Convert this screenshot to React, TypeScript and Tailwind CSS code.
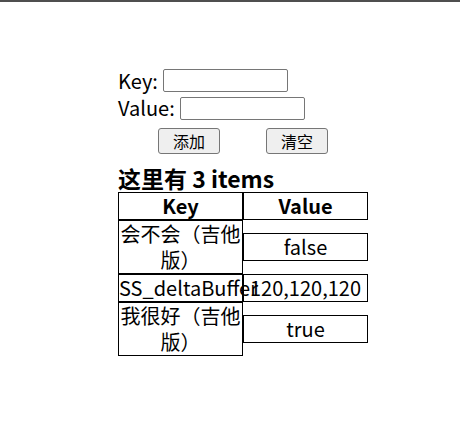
import React from 'react';

const rows: { key: string; value: string }[] = [
  { key: '会不会（吉他版）', value: 'false' },
  { key: 'SS_deltaBuffer', value: '120,120,120' },
  { key: '我很好（吉他版）', value: 'true' },
];

const font = { fontFamily: '"Noto Sans CJK SC", "Noto Sans", sans-serif' };

export default function App() {
  return (
    <div className="min-h-[423px] bg-white text-black" style={font}>
      <div className="h-[2px] bg-[#4f4f4f]" />
      <div className="pl-[118px] pt-[65px] text-[20px] leading-[26px]">
        <div className="flex h-[27px] items-center">
          <span>Key:</span>
          <input className="ml-[5px] h-[23px] w-[125px] rounded-[2px] border border-[#767676] px-1 text-[13px]" />
        </div>
        <div className="flex h-[28px] items-center">
          <span>Value:</span>
          <input className="ml-[5px] h-[23px] w-[125px] rounded-[2px] border border-[#767676] px-1 text-[13px]" />
        </div>
        <div className="mt-[6px] flex">
          <button className="ml-[40px] h-[26px] w-[62px] rounded-[3px] border border-[#767676] bg-[#efefef] text-[16px] leading-[22px]">
            添加
          </button>
          <button className="ml-[46px] h-[26px] w-[62px] rounded-[3px] border border-[#767676] bg-[#efefef] text-[16px] leading-[22px]">
            清空
          </button>
        </div>
        <h3 className="mt-[11px] text-[23px] font-bold leading-[26px]">这里有 3 items</h3>
        <div className="mt-[1px] w-[250px]">
          <div className="flex items-center font-bold">
            <div className="w-[125px] border border-black text-center">Key</div>
            <div className="w-[125px] border border-black text-center">Value</div>
          </div>
          {rows.map((r) => (
            <div key={r.key} className="flex items-center">
              <div className="w-[125px] border border-black text-center">{r.key}</div>
              <div className="w-[125px] border border-black text-center whitespace-nowrap">{r.value}</div>
            </div>
          ))}
        </div>
      </div>
    </div>
  );
}
